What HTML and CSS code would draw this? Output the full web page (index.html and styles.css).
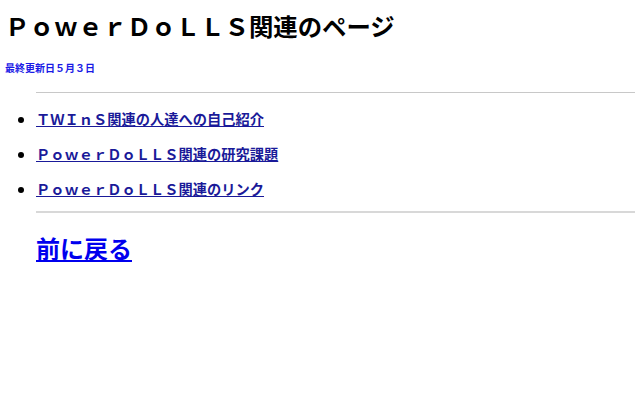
FILE: index.html
```html
<!DOCTYPE html>
<html lang="ja">
<head>
<meta charset="utf-8">
<link rel="stylesheet" href="styles.css">
</head>
<body>
<h1 class="title">ＰｏｗｅｒＤｏＬＬＳ関連のページ</h1>
<p class="updated">最終更新日５月３日</p>
<div class="content">
<hr class="rule-thin">
<ul class="links">
<li><a href="#">ＴＷＩｎＳ関連の人達への自己紹介</a></li>
<li><a href="#">ＰｏｗｅｒＤｏＬＬＳ関連の研究課題</a></li>
<li><a href="#">ＰｏｗｅｒＤｏＬＬＳ関連のリンク</a></li>
</ul>
<hr class="rule-thick">
<a class="back" href="#">前に戻る</a>
</div>
</body>
</html>
```
FILE: styles.css
```css
html, body { background: #fff; }
body {
  margin: 0 5px;
  font-family: "Noto Sans CJK JP", "Noto Sans", sans-serif;
}
.title {
  margin: 9px 0 0 0;
  font-size: 24.4px;
  line-height: 34px;
  font-weight: bold;
  color: #000;
}
.updated {
  margin: 18px 0 0 0;
  font-size: 10px;
  line-height: 14px;
  font-weight: bold;
  color: #1a1ae6;
}
.content {
  padding-left: 31px;
  margin-top: 17px;
}
.rule-thin {
  margin: 0;
  border: 0;
  border-top: 1px solid #c8c8c8;
}
.rule-thick {
  margin: 0;
  border: 0;
  height: 2px;
  background: #d8d8d8;
}
.links {
  margin: 0;
  padding: 16px 0 12px 0;
  list-style: disc;
  display: flex;
  flex-direction: column;
  gap: 15px;
}
.links li {
  font-size: 14.25px;
  line-height: 20px;
  font-weight: bold;
}
.links a { color: #1a1a99; }
.back {
  display: inline-block;
  margin-top: 19px;
  font-size: 24px;
  line-height: 32px;
  font-weight: bold;
  color: #0000ee;
}
```
